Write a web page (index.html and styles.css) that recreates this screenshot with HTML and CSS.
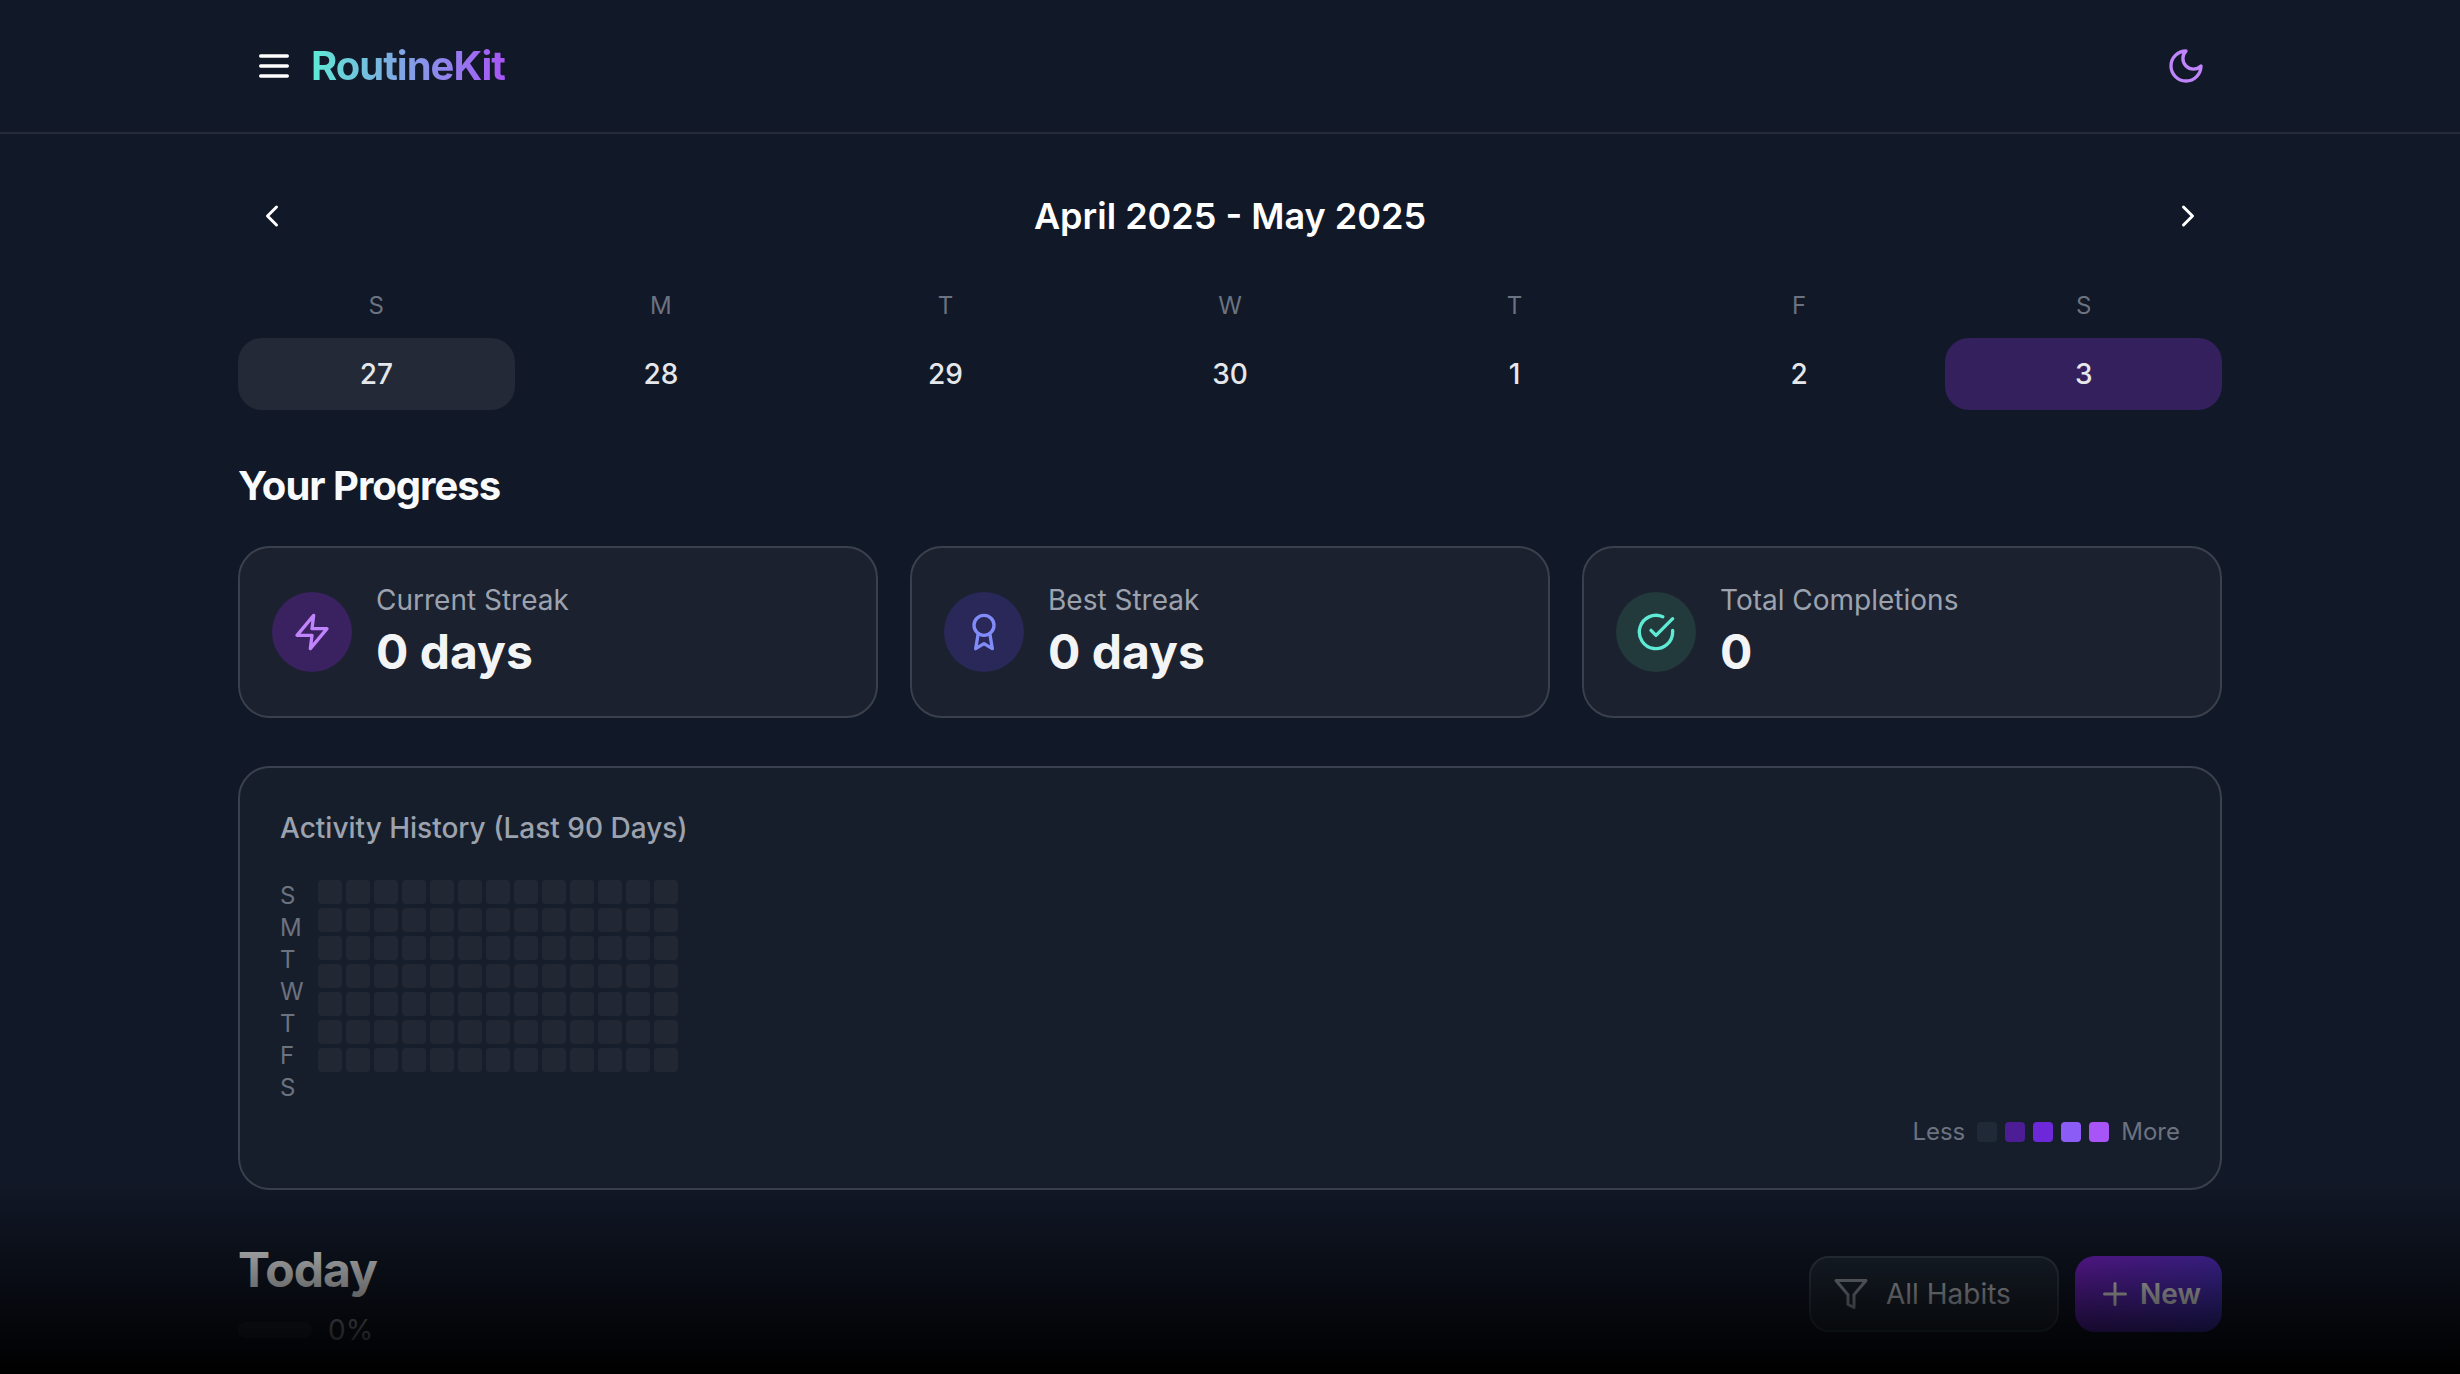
FILE: index.html
```html
<!DOCTYPE html>
<html lang="en">
<head>
<meta charset="utf-8">
<title>RoutineKit</title>
<link rel="stylesheet" href="styles.css">
</head>
<body>
<div class="app">
  <header class="topbar">
    <div class="wrap topbar-inner">
      <div class="brand">
        <button class="icon-btn"><svg class="ic40 white" viewBox="0 0 24 24"><path d="M4 6h16M4 12h16M4 18h16"/></svg></button>
        <span class="logo">RoutineKit</span>
      </div>
      <button class="icon-btn"><svg class="ic40 moon" viewBox="0 0 24 24"><path d="M12 3a6 6 0 0 0 9 9 9 9 0 1 1-9-9Z"/></svg></button>
    </div>
  </header>
  <main class="wrap main">
    <nav class="cal-nav">
      <button class="icon-btn"><svg class="ic36 white" viewBox="0 0 24 24"><path d="m15 18-6-6 6-6"/></svg></button>
      <h2 class="cal-title">April 2025 - May 2025</h2>
      <button class="icon-btn"><svg class="ic36 white" viewBox="0 0 24 24"><path d="m9 18 6-6-6-6"/></svg></button>
    </nav>
    <div class="week">
      <div class="day"><span class="dow">S</span><span class="date today">27</span></div>
      <div class="day"><span class="dow">M</span><span class="date">28</span></div>
      <div class="day"><span class="dow">T</span><span class="date">29</span></div>
      <div class="day"><span class="dow">W</span><span class="date">30</span></div>
      <div class="day"><span class="dow">T</span><span class="date">1</span></div>
      <div class="day"><span class="dow">F</span><span class="date">2</span></div>
      <div class="day"><span class="dow">S</span><span class="date selected">3</span></div>
    </div>
    <h2 class="section-title">Your Progress</h2>
    <section class="stats">
      <div class="stat">
        <div class="stat-icon purple"><svg class="ic40" viewBox="0 0 24 24"><polygon points="13 2 3 14 12 14 11 22 21 10 12 10 13 2"/></svg></div>
        <div><div class="stat-label">Current Streak</div><div class="stat-value">0 days</div></div>
      </div>
      <div class="stat">
        <div class="stat-icon indigo"><svg class="ic40" viewBox="0 0 24 24"><circle cx="12" cy="8" r="6"/><path d="M15.477 12.89 17 22l-5-3-5 3 1.523-9.11"/></svg></div>
        <div><div class="stat-label">Best Streak</div><div class="stat-value">0 days</div></div>
      </div>
      <div class="stat">
        <div class="stat-icon teal"><svg class="ic40" viewBox="0 0 24 24"><path d="M22 11.08V12a10 10 0 1 1-5.93-9.14"/><path d="M22 4 12 14.01l-3-3"/></svg></div>
        <div><div class="stat-label">Total Completions</div><div class="stat-value">0</div></div>
      </div>
    </section>
    <section class="activity">
      <h3 class="activity-title">Activity History (Last 90 Days)</h3>
      <div class="heat">
        <div class="heat-labels"><span>S</span><span>M</span><span>T</span><span>W</span><span>T</span><span>F</span><span>S</span></div>
        <div class="heat-grid" id="heat-grid"></div>
      </div>
      <div class="legend">
        <span>Less</span>
        <div class="legend-cells">
          <i class="cell l0"></i><i class="cell l1"></i><i class="cell l2"></i><i class="cell l3"></i><i class="cell l4"></i>
        </div>
        <span>More</span>
      </div>
    </section>
    <section class="today-row">
      <div>
        <h2 class="today-title">Today</h2>
        <div class="today-progress"><div class="bar"></div><span class="pct">0%</span></div>
      </div>
      <div class="actions">
        <button class="filter"><svg class="ic36" viewBox="0 0 24 24"><polygon points="22 3 2 3 10 12.46 10 19 14 21 14 12.46 22 3"/></svg><span>All Habits</span></button>
        <button class="new"><svg class="ic36" viewBox="0 0 24 24"><path d="M5 12h14M12 5v14"/></svg><span>New</span></button>
      </div>
    </section>
  </main>
  <div class="fade"></div>
</div>
<script src="app.js"></script>
</body>
</html>
```
FILE: app.js
```js
var g = document.getElementById('heat-grid');
for (var i = 0; i < 91; i++) {
  var c = document.createElement('i');
  c.className = 'heat-cell';
  g.appendChild(c);
}
```
FILE: styles.css
```css
* { box-sizing: border-box; margin: 0; padding: 0; }
html, body { height: 100%; }
body {
  background: #111827;
  color: #f3f4f6;
  font-family: Inter, "Liberation Sans", sans-serif;
  overflow: hidden;
}
button { background: none; border: 0; color: inherit; font: inherit; }
svg { display: block; fill: none; stroke: currentColor; stroke-linecap: round; stroke-linejoin: round; stroke-width: 2; flex: none; }
.ic40 { width: 40px; height: 40px; }
.ic36 { width: 36px; height: 36px; }
.white { color: #fff; }
.moon { color: #c084fc; }
.app { position: relative; height: 100vh; overflow: hidden; }
.wrap { width: 1984px; margin: 0 auto; }
.topbar { height: 134px; border-bottom: 2px solid #252b38; }
.topbar-inner { height: 132px; display: flex; align-items: center; justify-content: space-between; }
.brand { display: flex; align-items: center; gap: 1px; }
.icon-btn { padding: 16px; display: block; }
.logo {
  font-size: 40px; line-height: 56px; font-weight: 700; letter-spacing: -1px;
  background: linear-gradient(90deg, #5eead4, #a855f7);
  -webkit-background-clip: text; background-clip: text; color: transparent;
}
.main { padding-top: 48px; }
.cal-nav { display: flex; align-items: center; justify-content: space-between; margin-bottom: 40px; }
.cal-title { font-size: 36px; line-height: 56px; font-weight: 600; color: #fff; }
.week { display: grid; grid-template-columns: repeat(7, 1fr); gap: 8px; margin-bottom: 48px; }
.day { display: flex; flex-direction: column; gap: 16px; text-align: center; }
.dow { font-size: 24px; line-height: 32px; color: #6b7280; }
.date { height: 72px; line-height: 72px; border-radius: 24px; font-size: 28px; font-weight: 500; color: #e5e7eb; }
.today { background: #232936; }
.selected { background: #33205c; }
.section-title { font-size: 40px; line-height: 56px; font-weight: 700; margin-bottom: 32px; color: #f9fafb; letter-spacing: -1px; }
.stats { display: grid; grid-template-columns: repeat(3, 1fr); gap: 32px; margin-bottom: 48px; }
.stat {
  height: 172px; padding: 32px; display: flex; align-items: center; gap: 24px;
  background: #1b212f; border: 2px solid #3a404d; border-radius: 32px;
}
.stat-icon { width: 80px; height: 80px; border-radius: 50%; display: flex; align-items: center; justify-content: center; }
.purple { background: #3a2260; color: #c084fc; }
.indigo { background: #2a2858; color: #818cf8; }
.teal { background: #223a3c; color: #5eead4; }
.stat-label { font-size: 28px; line-height: 40px; color: #9ca3af; }
.stat-value { font-size: 48px; line-height: 64px; font-weight: 700; color: #f3f4f6; }
.activity {
  height: 424px; padding: 40px; margin-bottom: 48px;
  background: #171e2b; border: 2px solid #3a404d; border-radius: 32px;
}
.activity-title { font-size: 28px; line-height: 40px; font-weight: 500; color: #9ca3af; margin-bottom: 32px; }
.heat { display: flex; gap: 12px; height: 224px; margin-bottom: 12px; }
.heat-labels { width: 26px; display: flex; flex-direction: column; font-size: 24px; line-height: 32px; color: #6b7280; }
.heat-grid { display: grid; grid-template-columns: repeat(13, 24px); grid-auto-rows: 24px; gap: 4px; align-content: start; }
.heat-cell { display: block; background: #212834; border-radius: 4px; }
.legend { display: flex; justify-content: flex-end; align-items: center; gap: 12px; font-size: 24px; line-height: 32px; color: #6b7280; }
.legend-cells { display: flex; gap: 8px; }
.cell { display: block; width: 20px; height: 20px; border-radius: 4px; }
.l0 { background: #1f2937; }
.l1 { background: #4c1d95; }
.l2 { background: #6d28d9; }
.l3 { background: #8b5cf6; }
.l4 { background: #a855f7; }
.today-row { display: flex; justify-content: space-between; align-items: center; }
.today-title { font-size: 48px; line-height: 64px; font-weight: 700; letter-spacing: -1px; color: #f3f4f6; }
.today-progress { display: flex; align-items: center; gap: 16px; margin-top: 8px; }
.bar { width: 74px; height: 16px; border-radius: 8px; background: #1f2937; }
.pct { font-size: 28px; line-height: 40px; color: #9ca3af; }
.actions { display: flex; gap: 16px; }
.filter {
  width: 250px; height: 76px; padding-left: 22px; display: flex; align-items: center; gap: 17px;
  background: #1f2937; border: 2px solid #374151; border-radius: 20px; font-size: 28px; color: #d1d5db;
}
.filter svg { color: #9ca3af; }
.new {
  width: 147px; height: 76px; padding-left: 22px; display: flex; align-items: center; gap: 7px;
  background: linear-gradient(135deg, #7e22ce, #4338ca); border-radius: 20px; font-size: 28px; font-weight: 600; color: #fff;
}
.fade {
  position: absolute; left: 0; right: 0; bottom: 0; height: 192px; pointer-events: none;
  background: linear-gradient(to bottom, rgba(0,0,0,0), rgba(0,0,0,1));
}
```
